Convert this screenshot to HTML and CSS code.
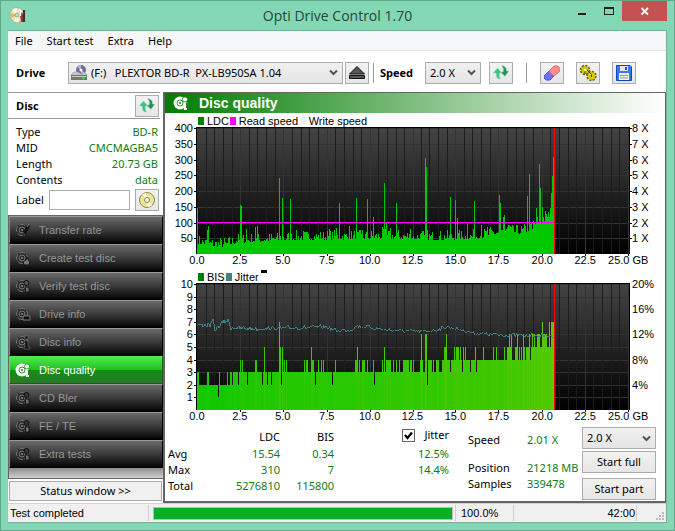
FILE: index.html
```html
<!DOCTYPE html>
<html lang="en">
<head>
    <meta charset="UTF-8">
    <meta name="viewport" content="width=device-width, initial-scale=1.0">
    <title>Opti Drive Control 1.70</title>
    <link rel="stylesheet" href="styles.css">
</head>
<body>

<!-- shared icons -->
<svg class="defs" width="0" height="0">
    <symbol id="i-disc" viewBox="0 0 16 16">
        <circle cx="7" cy="8" r="6" fill="#2a2a2a"/>
        <circle cx="7" cy="8" r="5.500" fill="none" stroke="#777" stroke-dasharray="6 1.500"/>
        <circle cx="7" cy="8" r="3" fill="none" stroke="#777"/>
        <circle cx="7" cy="8" r="1" fill="#888"/>
    </symbol>
    <symbol id="i-quality" viewBox="0 0 16 16">
        <circle cx="7" cy="8" r="6.500" fill="#fff"/>
        <circle cx="7" cy="8" r="3" fill="none" stroke="#1c8a1c" stroke-width=".9"/>
        <circle cx="7" cy="8" r="1" fill="#1c8a1c"/>
        <path d="M9 10.500L16 7V12L14 11Z" fill="#1c8a1c"/>
        <circle cx="12" cy="4.500" r="2.500" fill="#fff" stroke="#1c8a1c" stroke-width=".8"/>
        <path d="M10 9H13V13H14V15H11Z" fill="#fff"/>
    </symbol>
    <symbol id="i-refresh" viewBox="0 0 18 18">
        <path d="M1 9L5.500 4 10 9H7.500V12.500L8.500 15H6.500Q4 14 4 9Z" fill="#3cc281" stroke="#a9e5c9" stroke-width=".6"/>
        <path d="M17 7L13 12.500 8.500 8H11Q12.500 5 9.500 1.500Q15 2 14.500 7Z" fill="#2a8d5c" stroke="#a9e5c9" stroke-width=".6"/>
    </symbol>
</svg>

<div class="window">
    <header class="titlebar">
        <svg class="app-icon" viewBox="0 0 18 18">
            <circle cx="8" cy="9" r="7.200" fill="#e9e3cb" stroke="#a79f83" stroke-width=".7"/>
            <path d="M8 9L3 4A7 7 0 0 1 8 2ZM8 9L10 16A7 7 0 0 1 5 15.500Z" fill="#fff8d8"/>
            <path d="M8 9L1.500 7A7 7 0 0 0 2 12Z" fill="#d9b96c"/>
            <circle cx="8" cy="9" r="2" fill="#b8e4cf" stroke="#8f8b75" stroke-width=".7"/>
            <path d="M11 9L13 6 14 9V16H12Z" fill="#913b2c"/>
            <path d="M14 4H16V16H14Z" fill="#3a302b"/>
            <path d="M11.500 3V10" stroke="#fff" stroke-width="1.200"/>
        </svg>
        <h1>Opti Drive Control 1.70</h1>
        <div class="window-buttons">
            <button type="button" aria-label="Minimize"><svg viewBox="0 0 10 10" width="10" height="10"><path d="M1 7H9V9H1Z" fill="#222"/></svg></button>
            <button type="button" aria-label="Maximize"><svg viewBox="0 0 10 10" width="10" height="10"><path d="M0 1H10V9H0ZM1 3V8H9V3Z" fill="#222" fill-rule="evenodd"/></svg></button>
            <button type="button" class="close" aria-label="Close"><svg viewBox="0 0 10 10" width="10" height="10"><path d="M1.500 2L8 8.500M8 2L1.500 8.500" stroke="#fff" stroke-width="1.800"/></svg></button>
        </div>
    </header>

    <div class="client">
        <nav class="menu">
            <a href="#">File</a>
            <a href="#">Start test</a>
            <a href="#">Extra</a>
            <a href="#">Help</a>
        </nav>

        <div class="toolbar">
            <label class="drive-label" for="drive">Drive</label>
            <div class="combo drive">
                <svg viewBox="0 0 16 16" width="16" height="16">
                    <circle cx="10" cy="5" r="5" fill="#716b9f"/>
                    <path d="M10 5L6 2A5 5 0 0 1 10 0ZM10 5L14 8A5 5 0 0 1 10 10Z" fill="#b7b1da"/>
                    <circle cx="10" cy="5" r="1.500" fill="#fff"/>
                    <path d="M3 7H7L10 9L13 7L16 10H0Z" fill="#ccc" stroke="#888" stroke-width=".5"/>
                    <path d="M0 10H16V15H0Z" fill="#777"/>
                    <path d="M1 11H15V12H1Z" fill="#c5c5c5"/>
                    <path d="M11 12H14V14H11Z" fill="#28e028"/>
                </svg>
                <select id="drive"><option>(F:) &nbsp; PLEXTOR BD-R&nbsp; PX-LB950SA 1.04</option></select>
            </div>
            <button type="button" class="tool" aria-label="Eject">
                <svg viewBox="0 0 16 16" width="16" height="16"><path d="M8 1.500L15.500 9H.5ZM.5 10.500H15.500V13.500H.5Z" fill="#555" stroke="#111"/></svg>
            </button>
            <span class="divider"></span>
            <label class="speed-label" for="speed">Speed</label>
            <div class="combo speed"><select id="speed"><option>2.0 X</option></select></div>
            <button type="button" class="tool" aria-label="Refresh"><svg width="18" height="18"><use href="#i-refresh"/></svg></button>
            <span class="divider wide"></span>
            <button type="button" class="tool" aria-label="Erase">
                <svg viewBox="0 0 16 16" width="16" height="16">
                    <path d="M0 11L5 6 10 11 6 15Q2 16 0 13Z" fill="#6f72ff" stroke="#3a3cd0" stroke-width=".8"/>
                    <path d="M5 6L10 1Q15 0 16 4V6L10 11Q7 10 5 6Z" fill="#ff8f8f" stroke="#e05a5a" stroke-width=".8"/>
                </svg>
            </button>
            <button type="button" class="tool spaced" aria-label="Options">
                <svg viewBox="0 0 18 18" width="18" height="18">
                    <circle cx="6" cy="6" r="4" fill="#c9bd00" stroke="#6c6400" stroke-width="2.500" stroke-dasharray="2 1.100"/>
                    <circle cx="12.500" cy="12" r="4" fill="#d8cc10" stroke="#6c6400" stroke-width="2.500" stroke-dasharray="2 1.100"/>
                    <circle cx="6" cy="6" r="3.700" fill="#d0c400"/>
                    <circle cx="12.500" cy="12" r="3.700" fill="#d8cc10"/>
                    <path d="M6 6V10M8 6L12 10M12.500 10.500V13" stroke="#4c4600" fill="none"/>
                    <circle cx="6" cy="6" r="1.300" fill="#eee"/>
                </svg>
            </button>
            <button type="button" class="tool spaced" aria-label="Save">
                <svg viewBox="0 0 16 16" width="16" height="16">
                    <path d="M.5.5H14L15.500 2V15.500H.5Z" fill="#2f7df0" stroke="#0d48bd"/>
                    <path d="M4 1H12V6H4Z" fill="#e5e5e5"/><path d="M9 2H11V5H9Z" fill="#1b58c8"/>
                    <path d="M3 8H13V15H3Z" fill="#f4f4f4"/><path d="M4 10.500H12M4 13H12" stroke="#999"/>
                </svg>
            </button>
        </div>

        <div class="content">
            <aside class="sidebar">
                <div class="disc-head">
                    <h2>Disc</h2>
                    <button type="button" class="tool" aria-label="Reload disc"><svg width="18" height="18"><use href="#i-refresh"/></svg></button>
                </div>
                <dl class="disc-info">
                    <div><dt>Type</dt><dd>BD-R</dd></div>
                    <div><dt>MID</dt><dd>CMCMAGBA5</dd></div>
                    <div><dt>Length</dt><dd>20.73 GB</dd></div>
                    <div><dt>Contents</dt><dd>data</dd></div>
                </dl>
                <div class="disc-label">
                    <label for="label">Label</label>
                    <input type="text" id="label">
                    <button type="button" class="tool" aria-label="Disc label">
                        <svg viewBox="0 0 18 18" width="18" height="18">
                            <circle cx="9" cy="9" r="7.500" fill="#e9e59b" stroke="#8f8b4d"/>
                            <path d="M9 9L4 3.500A7 7 0 0 1 8 2ZM9 9L14 14.500A7 7 0 0 1 10 16Z" fill="#fffde0"/>
                            <circle cx="9" cy="9" r="2.500" fill="#f5f5e8" stroke="#8f8b4d"/>
                        </svg>
                    </button>
                </div>
                <nav class="tests">
                    <a href="#"><svg viewBox="0 0 16 16"><use href="#i-disc"/><path d="M8 10L13 2L15 4L11 13Z" fill="#111"/><path d="M12 5L14 2" stroke="#888"/></svg>Transfer rate</a>
                    <a href="#"><svg viewBox="0 0 16 16"><use href="#i-disc"/><path d="M9 15Q7 11 11 10L12 7L14 11Q16 15 12 15Z" fill="#777" stroke="#111"/></svg>Create test disc</a>
                    <a href="#"><svg viewBox="0 0 16 16"><use href="#i-disc"/><circle cx="11.500" cy="5" r="2.500" fill="#555" stroke="#111"/><path d="M10 9H14V14H11Z" fill="#777" stroke="#111"/></svg>Verify test disc</a>
                    <a href="#"><svg viewBox="0 0 16 16"><use href="#i-disc"/><path d="M8 10H15V14H8Z" fill="#111" stroke="#777"/></svg>Drive info</a>
                    <a href="#"><svg viewBox="0 0 16 16"><use href="#i-disc"/><path d="M10 2H13V5H10ZM9 7H13V13H15V15H9V13H10V9H9Z" fill="#111" stroke="#777" stroke-width=".6"/></svg>Disc info</a>
                    <a href="#" class="active"><svg viewBox="0 0 16 16"><use href="#i-quality"/></svg>Disc quality</a>
                    <a href="#"><svg viewBox="0 0 16 16"><use href="#i-disc"/><circle cx="11.500" cy="5" r="2.500" fill="#333" stroke="#111"/><path d="M10 9H14V14H11Z" fill="#777" stroke="#111"/></svg>CD Bler</a>
                    <a href="#"><svg viewBox="0 0 16 16"><use href="#i-disc"/><circle cx="11.500" cy="5" r="2.500" fill="#333" stroke="#111"/><path d="M10 9H14V14H11Z" fill="#777" stroke="#111"/></svg>FE / TE</a>
                    <a href="#"><svg viewBox="0 0 16 16"><use href="#i-disc"/><circle cx="11.500" cy="5" r="2.500" fill="#333" stroke="#111"/><path d="M10 9H14V14H11Z" fill="#777" stroke="#111"/></svg>Extra tests</a>
                </nav>
                <button type="button" class="status-button">Status window &gt;&gt;</button>
            </aside>

            <main class="panel">
                <h2 class="panel-title">
                    <svg viewBox="0 0 16 16"><use href="#i-quality"/></svg>
                    Disc quality
                </h2>
                <svg class="chart" id="ldc-chart" viewBox="0 0 501 156"></svg>
                <svg class="chart" id="bis-chart" viewBox="0 0 501 156"></svg>

                <div class="results">
                    <table>
                        <thead>
                            <tr><th></th><th>LDC</th><th>BIS</th><th><label class="jitter"><input type="checkbox" checked><span>Jitter</span></label></th></tr>
                        </thead>
                        <tbody>
                            <tr><th>Avg</th><td>15.54</td><td>0.34</td><td>12.5%</td></tr>
                            <tr><th>Max</th><td>310</td><td>7</td><td>14.4%</td></tr>
                            <tr><th>Total</th><td>5276810</td><td>115800</td><td></td></tr>
                        </tbody>
                    </table>
                    <dl class="progress-info">
                        <dt class="first">Speed</dt><dd class="first">2.01 X</dd>
                        <dt>Position</dt><dd>21218 MB</dd>
                        <dt>Samples</dt><dd>339478</dd>
                    </dl>
                    <div class="actions">
                        <div class="combo"><select aria-label="Test speed"><option>2.0 X</option></select></div>
                        <button type="button">Start full</button>
                        <button type="button">Start part</button>
                    </div>
                </div>
            </main>
        </div>

        <footer class="statusbar">
            <span class="message">Test completed</span>
            <progress value="100" max="100" aria-label="Progress"></progress>
            <span class="percent">100.0%</span>
            <span class="time">42:00</span>
            <svg class="grip" viewBox="0 0 9 9"><path d="M6 0H8V2H6ZM3 3H5V5H3ZM6 3H8V5H6ZM0 6H2V8H0ZM3 6H5V8H3ZM6 6H8V8H6Z" fill="#bbb"/></svg>
        </footer>
    </div>
</div>

<script src="charts.js"></script>
</body>
</html>
```
FILE: styles.css
```css
* {
    box-sizing: border-box;
}
body {
    margin: 0;
    font-family: "Noto Sans", "Open Sans", sans-serif;
    font-size: 11px;
    line-height: 16px;
    color: #000;
}
h1, h2, dl, dd {
    margin: 0;
}
a {
    color: inherit;
    text-decoration: none;
}
button, select, input {
    font: inherit;
    color: inherit;
}
svg {
    display: block;
    flex: none;
}
.defs {
    position: absolute;
}
.window {
    display: flex;
    flex-direction: column;
    min-height: 100vh;
    padding: 0 7px 7px;
    background: #82d8b4;
    border: 1px solid #62a88b;
}

/* title bar */
.titlebar {
    display: grid;
    grid-template-columns: 100px 1fr 100px;
    height: 29px;
}
.app-icon {
    width: 18px;
    height: 18px;
    margin: 5px 0 0 1px;
}
.titlebar h1 {
    font-family: "Open Sans", sans-serif;
    font-size: 14px;
    font-weight: normal;
    line-height: 29px;
    text-align: center;
    color: #26463a;
}
.window-buttons {
    display: flex;
    justify-content: flex-end;
    height: 20px;
}
.window-buttons button {
    display: flex;
    align-items: center;
    justify-content: center;
    width: 27px;
    padding: 0;
    border: 0;
    background: none;
}
.window-buttons .close {
    width: 45px;
    background: #c75050;
}

/* client area */
.client {
    flex: 1;
    display: flex;
    flex-direction: column;
    border: 1px solid #6fb699;
    border-width: 1px 1px 1px 0;
    background: #fff;
}
.menu {
    display: flex;
    gap: 14px;
    height: 20px;
    padding: 2px 7px 0;
    background: #f5f6f7;
    border-bottom: 1px solid #e6e6e6;
}
.toolbar {
    display: flex;
    align-items: center;
    height: 41px;
    padding: 2px 8px 0;
}
.toolbar label {
    font-weight: bold;
    font-family: "Open Sans", sans-serif;
}
.drive-label {
    width: 52px;
}
.speed-label {
    width: 45px;
}
.combo {
    display: flex;
    align-items: center;
    height: 22px;
    background: linear-gradient(#f1f1f1, #e4e4e4);
    border: 1px solid #acacac;
}
.combo select {
    flex: 1;
    min-width: 0;
    height: 20px;
    padding: 0 16px 0 4px;
    border: 0;
    appearance: none;
    background: url("data:image/svg+xml,%3Csvg xmlns='http://www.w3.org/2000/svg' width='9' height='7'%3E%3Cpath d='M1 1.500L4.500 5L8 1.500' fill='none' stroke='%23555' stroke-width='2'/%3E%3C/svg%3E") no-repeat right 4px center;
}
.combo.drive {
    flex: 0 1 275px;
    margin-right: 2px;
    padding-left: 2px;
}
.combo.speed {
    width: 56px;
    margin-right: 8px;
}
.tool {
    display: flex;
    align-items: center;
    justify-content: center;
    flex: none;
    width: 24px;
    height: 22px;
    padding: 0;
    background: linear-gradient(#f2f2f2, #e6e6e6);
    border: 1px solid #acacac;
}
.tool.spaced {
    margin-left: 12px;
}
.divider {
    width: 1px;
    height: 20px;
    margin: 0 6px 0 4px;
    background: #999;
}
.divider.wide {
    margin: 0 13px;
}

/* sidebar */
.content {
    flex: 1;
    display: flex;
}
.sidebar {
    display: flex;
    flex-direction: column;
    width: 155px;
}
.disc-head {
    display: flex;
    align-items: center;
    justify-content: space-between;
    height: 27px;
    margin-right: 3px;
    padding: 0 1px 0 8px;
    border-top: 1px solid #999;
    border-bottom: 1px solid #999;
}
.disc-head h2 {
    font-family: "Open Sans", sans-serif;
    font-size: 11px;
}
.disc-info {
    padding: 5px 5px 0 8px;
}
.disc-info div {
    display: flex;
    justify-content: space-between;
}
.disc-info dd, td, .progress-info dd {
    color: #107c10;
}
.disc-label {
    display: flex;
    align-items: center;
    gap: 5px;
    height: 27px;
    padding: 0 4px 3px 8px;
}
.disc-label input {
    flex: 1;
    min-width: 0;
    height: 20px;
    border: 1px solid #acacac;
}
.tests {
    flex: 1;
    border: 1px solid #666;
    border-right: 0;
    background: linear-gradient(#888 252px, #8c8c8c 252px, #d0d0d0);
    font-family: "Liberation Sans", Arial, sans-serif;
}
.tests a {
    display: flex;
    align-items: center;
    gap: 8px;
    height: 28px;
    padding-left: 5px;
    color: #969696;
    background: linear-gradient(#6a6a6a, #3a3a3a 50%, #050505);
    border: 1px solid #000;
    border-top-color: #999;
    border-left-color: #888;
}
.tests svg {
    width: 16px;
    height: 16px;
}
.tests .active {
    color: #fff;
    background: linear-gradient(#4de94d, #22bf22 50%, #128f12 50%, #2a792a);
    border-color: #55e555 #146014 #146014 #55e555;
}
.status-button {
    height: 20px;
    margin: 2px 1px 2px 1px;
    padding: 0;
    background: #f0f0f0;
    border: 1px solid #acacac;
}

/* main panel */
.panel {
    flex: 1;
    min-width: 0;
    border: 1px solid #666;
    border-left-width: 2px;
}
.panel-title {
    display: flex;
    align-items: center;
    gap: 10px;
    height: 20px;
    padding-left: 8px;
    font-family: "Liberation Sans", Arial, sans-serif;
    font-size: 14px;
    color: #fff;
    background: linear-gradient(90deg, #007c00, #fff);
}
.panel-title svg {
    width: 16px;
    height: 16px;
}
.chart {
    width: 100%;
    font-family: "Liberation Sans", Arial, sans-serif;
    font-size: 11px;
}
.results {
    display: flex;
    justify-content: space-between;
    padding: 3px 9px 0 3px;
    border-bottom: 1px solid #666;
}
table {
    border-collapse: collapse;
    height: 66px;
}
th, td {
    padding: 0;
    font-weight: normal;
    text-align: right;
}
tbody th {
    text-align: left;
}
th:nth-child(1) {
    width: 40px;
}
th:nth-child(2) {
    width: 72px;
}
th:nth-child(3) {
    width: 54px;
}
th:nth-child(4) {
    width: 115px;
}
.jitter {
    display: inline-flex;
    align-items: center;
    gap: 9px;
}
.jitter input {
    appearance: none;
    width: 13px;
    height: 13px;
    margin: 0;
    border: 1px solid #666;
    background: url("data:image/svg+xml,%3Csvg xmlns='http://www.w3.org/2000/svg' width='11' height='11'%3E%3Cpath d='M2 5L4.500 8L9 2.500' fill='none' stroke='%23000' stroke-width='2.200'/%3E%3C/svg%3E");
}
.progress-info {
    display: grid;
    grid-template-columns: 59px 50px;
    grid-template-rows: 33px 16px 16px;
    margin-left: 14px;
    white-space: nowrap;
}
.progress-info .first {
    padding-top: 5px;
}
.actions {
    display: flex;
    flex-direction: column;
    width: 74px;
    padding-bottom: 1px;
}
.actions button {
    height: 22px;
    margin-top: 2px;
    padding: 0;
    background: linear-gradient(#f2f2f2, #e6e6e6);
    border: 1px solid #acacac;
}
.actions button:last-child {
    margin-top: 5px;
}

/* status bar */
.statusbar {
    display: flex;
    align-items: center;
    height: 19px;
    background: #f0f0f0;
    border-top: 1px solid #d0d0d0;
    font-family: "Liberation Sans", Arial, sans-serif;
}
.statusbar span {
    border-right: 1px solid #d0d0d0;
}
.message {
    width: 141px;
    padding-left: 2px;
}
progress {
    flex: 1;
    min-width: 0;
    height: 13px;
    margin: 0 2px 0 4px;
    appearance: none;
    border: 1px solid #bcbcbc;
}
progress::-webkit-progress-bar {
    background: #e6e6e6;
}
progress::-webkit-progress-value {
    background: #06b025;
}
.percent {
    width: 59px;
    padding-left: 5px;
    border-left: 1px solid #d0d0d0;
}
.time {
    width: 123px;
    padding-right: 1px;
    text-align: right;
}
.grip {
    width: 9px;
    height: 9px;
    margin: 6px 1px 0 19px;
}
```
FILE: charts.js
```js
const LEFT = 32, TOP = 15, WIDTH = 433, HEIGHT = 126;
const BOTTOM = TOP + HEIGHT;
const END = 358; // last recorded column

let seed = 7;
function noise() {
    seed = (seed * 16807) % 2147483647;
    return seed / 2147483647;
}

function rect(x, y, w, h, fill) {
    return `<rect x="${x}" y="${y}" width="${w}" height="${h}" fill="${fill}" shape-rendering="crispEdges"/>`;
}

function text(x, y, value, anchor = 'start') {
    return `<text x="${x}" y="${y}" text-anchor="${anchor}">${value}</text>`;
}

function interpolate(points, x) {
    for (let i = 1; i < points.length; i++) {
        const [x0, y0] = points[i - 1];
        const [x1, y1] = points[i];
        if (x <= x1) return y0 + (y1 - y0) * (x - x0) / (x1 - x0);
    }
    return points[points.length - 1][1];
}

function frame(id, rows) {
    let out = `<defs><linearGradient id="${id}-bg" x2="0" y2="1"><stop stop-color="#444"/><stop offset="1" stop-color="#000"/></linearGradient></defs>`;
    out += rect(LEFT, TOP, WIDTH, HEIGHT, `url(#${id}-bg)`);
    for (let i = 0; i < rows; i++) {
        const y = Math.round(TOP + HEIGHT * i / rows);
        out += rect(LEFT, y, WIDTH, 1, '#333') + rect(LEFT - 3, y, 2, 1, '#000');
    }
    for (let i = 1; i <= 50; i++) {
        const x = Math.round(LEFT + 8.64 * i);
        out += rect(x, TOP, 1, HEIGHT, i % 5 ? '#1c1c1c' : '#333');
        if (i % 5 === 0) out += rect(x, BOTTOM, 1, 2, '#000');
    }
    out += rect(LEFT - 1, TOP - 1, WIDTH + 2, 1, '#000');
    out += rect(LEFT - 1, TOP, 1, HEIGHT, '#000') + rect(LEFT + WIDTH, TOP, 1, HEIGHT, '#000');
    for (let i = 0; i < 10; i++) {
        out += text(Math.round(LEFT + 43.2 * i), 151, (i * 2.5).toFixed(1), 'middle');
    }
    return out + text(444, 151, '25.0 GB');
}

function ldcChart() {
    let out = frame('ldc', 8);
    for (let i = 1; i <= 8; i++) {
        const y = Math.round(BOTTOM - HEIGHT * i / 8);
        out += text(28, y + 4, i * 50, 'end');
        out += rect(LEFT + WIDTH, y, 3, 1, '#000') + text(468, y + 4, i + ' X');
    }
    const base = [[0, 12], [15, 9], [28, 9], [40, 13], [70, 14], [100, 16], [200, 17], [245, 16], [280, 17], [300, 21], [325, 22], [340, 28], [350, 34], [358, 45]];
    const spikes = {
        0: 46, 10: 24, 11: 28, 43: 49, 44: 48, 49: 25, 58: 27, 60: 28, 82: 76, 85: 56, 93: 55, 132: 25,
        139: 26, 142: 51, 152: 28, 159: 56, 165: 24, 170: 55, 176: 37, 185: 27, 187: 71, 189: 31,
        193: 26, 199: 51, 213: 25, 229: 96, 230: 87, 254: 57, 259: 54, 261: 36, 271: 30, 278: 53,
        285: 29, 291: 27, 303: 59, 304: 51, 307: 37, 308: 39, 312: 29, 313: 29, 314: 28, 317: 28,
        331: 58, 333: 80, 335: 32, 340: 46, 341: 37, 343: 90, 344: 66, 346: 47, 347: 37, 349: 43,
        354: 46, 355: 61, 356: 78, 357: 97
    };
    for (let x = 0; x < END; x++) {
        const h = spikes[x] || Math.round(interpolate(base, x) + noise() ** 2 * 10 - 2);
        out += rect(LEFT + x, BOTTOM - h, 1, h, '#00c800');
    }
    out += rect(LEFT, BOTTOM - 32, END, 1, '#f0f') + rect(LEFT, BOTTOM - 32, 1, 27, '#f0f');
    out += rect(LEFT + END, TOP, 1, HEIGHT, '#f00');
    out += rect(33, 4, 6, 8, '#007c00') + text(42, 12, 'LDC');
    out += rect(65, 4, 6, 8, '#f0f') + text(74, 12, 'Read speed');
    out += rect(135, 4, 6, 8, '#f0f0f0') + text(144, 12, 'Write speed');
    document.getElementById('ldc-chart').innerHTML = out;
}

function bisChart() {
    let out = frame('bis', 10);
    for (let i = 1; i <= 10; i++) {
        const y = Math.round(BOTTOM - HEIGHT * i / 10);
        out += text(28, y + 4, i, 'end');
        if (i % 2 === 0) out += text(468, y + 4, i * 2 + '%');
    }
    // [first column, last column, errors]
    const runs = [
        [0, 41, 2], [42, 245, 3], [246, 357, 4], [0, 1, 3], [10, 11, 3], [21, 21, 1], [22, 22, 3], [30, 30, 3],
        [33, 34, 3], [36, 40, 3], [43, 43, 4], [45, 45, 4], [50, 50, 2], [58, 59, 4], [65, 65, 2],
        [67, 67, 5], [70, 70, 2], [74, 74, 2], [82, 82, 7], [83, 83, 5], [84, 84, 2], [85, 85, 5],
        [87, 87, 4], [89, 89, 4], [107, 107, 4], [109, 110, 4], [114, 114, 5], [115, 116, 4],
        [118, 118, 2], [121, 121, 4], [124, 124, 4], [126, 126, 4], [135, 135, 2], [138, 138, 4],
        [158, 159, 4], [160, 160, 5], [162, 162, 4], [165, 167, 4], [170, 170, 4], [176, 176, 4],
        [177, 177, 2], [185, 185, 4], [187, 187, 5], [189, 193, 4], [196, 196, 4], [199, 199, 4],
        [202, 202, 4], [206, 211, 4], [213, 214, 4], [216, 216, 4], [224, 226, 4], [225, 225, 6],
        [229, 230, 6], [231, 231, 2], [232, 235, 4], [237, 237, 4], [240, 242, 4], [248, 250, 5],
        [250, 250, 6], [254, 254, 3], [258, 258, 5], [260, 262, 5], [264, 264, 5], [266, 266, 3],
        [267, 267, 5], [269, 269, 5], [274, 274, 3], [279, 279, 5], [280, 280, 3], [287, 287, 5],
        [297, 297, 5], [300, 300, 5], [308, 308, 5], [311, 315, 5], [313, 313, 6], [315, 315, 6],
        [319, 321, 5], [321, 321, 6], [323, 323, 5], [325, 325, 5], [327, 327, 6], [328, 328, 5],
        [330, 333, 5], [333, 333, 6], [335, 357, 5], [336, 336, 6], [338, 338, 6], [341, 343, 6],
        [346, 346, 7], [347, 350, 6], [353, 353, 7], [355, 357, 7]
    ];
    const errors = [];
    for (const [from, to, value] of runs) {
        for (let x = from; x <= to; x++) errors[x] = value;
    }
    for (let x = 0; x < END; x++) {
        const h = Math.round(errors[x] * 12.6);
        const red = Math.round(errors[x] * 9 + x / 12);
        out += rect(LEFT + x, BOTTOM - h, 1, h, `rgb(${red}, 200, 0)`);
    }
    const jitter = [[0, 41], [14, 41], [16, 35], [18, 46], [25, 39], [31, 36], [34, 44], [60, 45], [130, 43], [140, 47], [155, 46], [160, 42], [168, 43], [190, 46], [225, 48], [240, 46], [250, 43], [262, 45], [275, 49], [300, 51], [357, 52]];
    let line = '';
    for (let x = 0; x < END; x++) {
        const y = TOP + interpolate(jitter, x) + noise() * 4 - 2;
        line += `${LEFT + x},${Math.round(y)} `;
    }
    out += `<polyline points="${line}" fill="none" stroke="#408080" shape-rendering="crispEdges"/>`;
    out += rect(LEFT + END, TOP, 1, HEIGHT, '#f00');
    out += rect(33, 4, 6, 8, '#007c00') + text(42, 12, 'BIS');
    out += rect(61, 4, 6, 8, '#408080') + text(70, 12, 'Jitter') + rect(96, 1, 6, 3, '#000');
    document.getElementById('bis-chart').innerHTML = out;
}

ldcChart();
bisChart();
```
